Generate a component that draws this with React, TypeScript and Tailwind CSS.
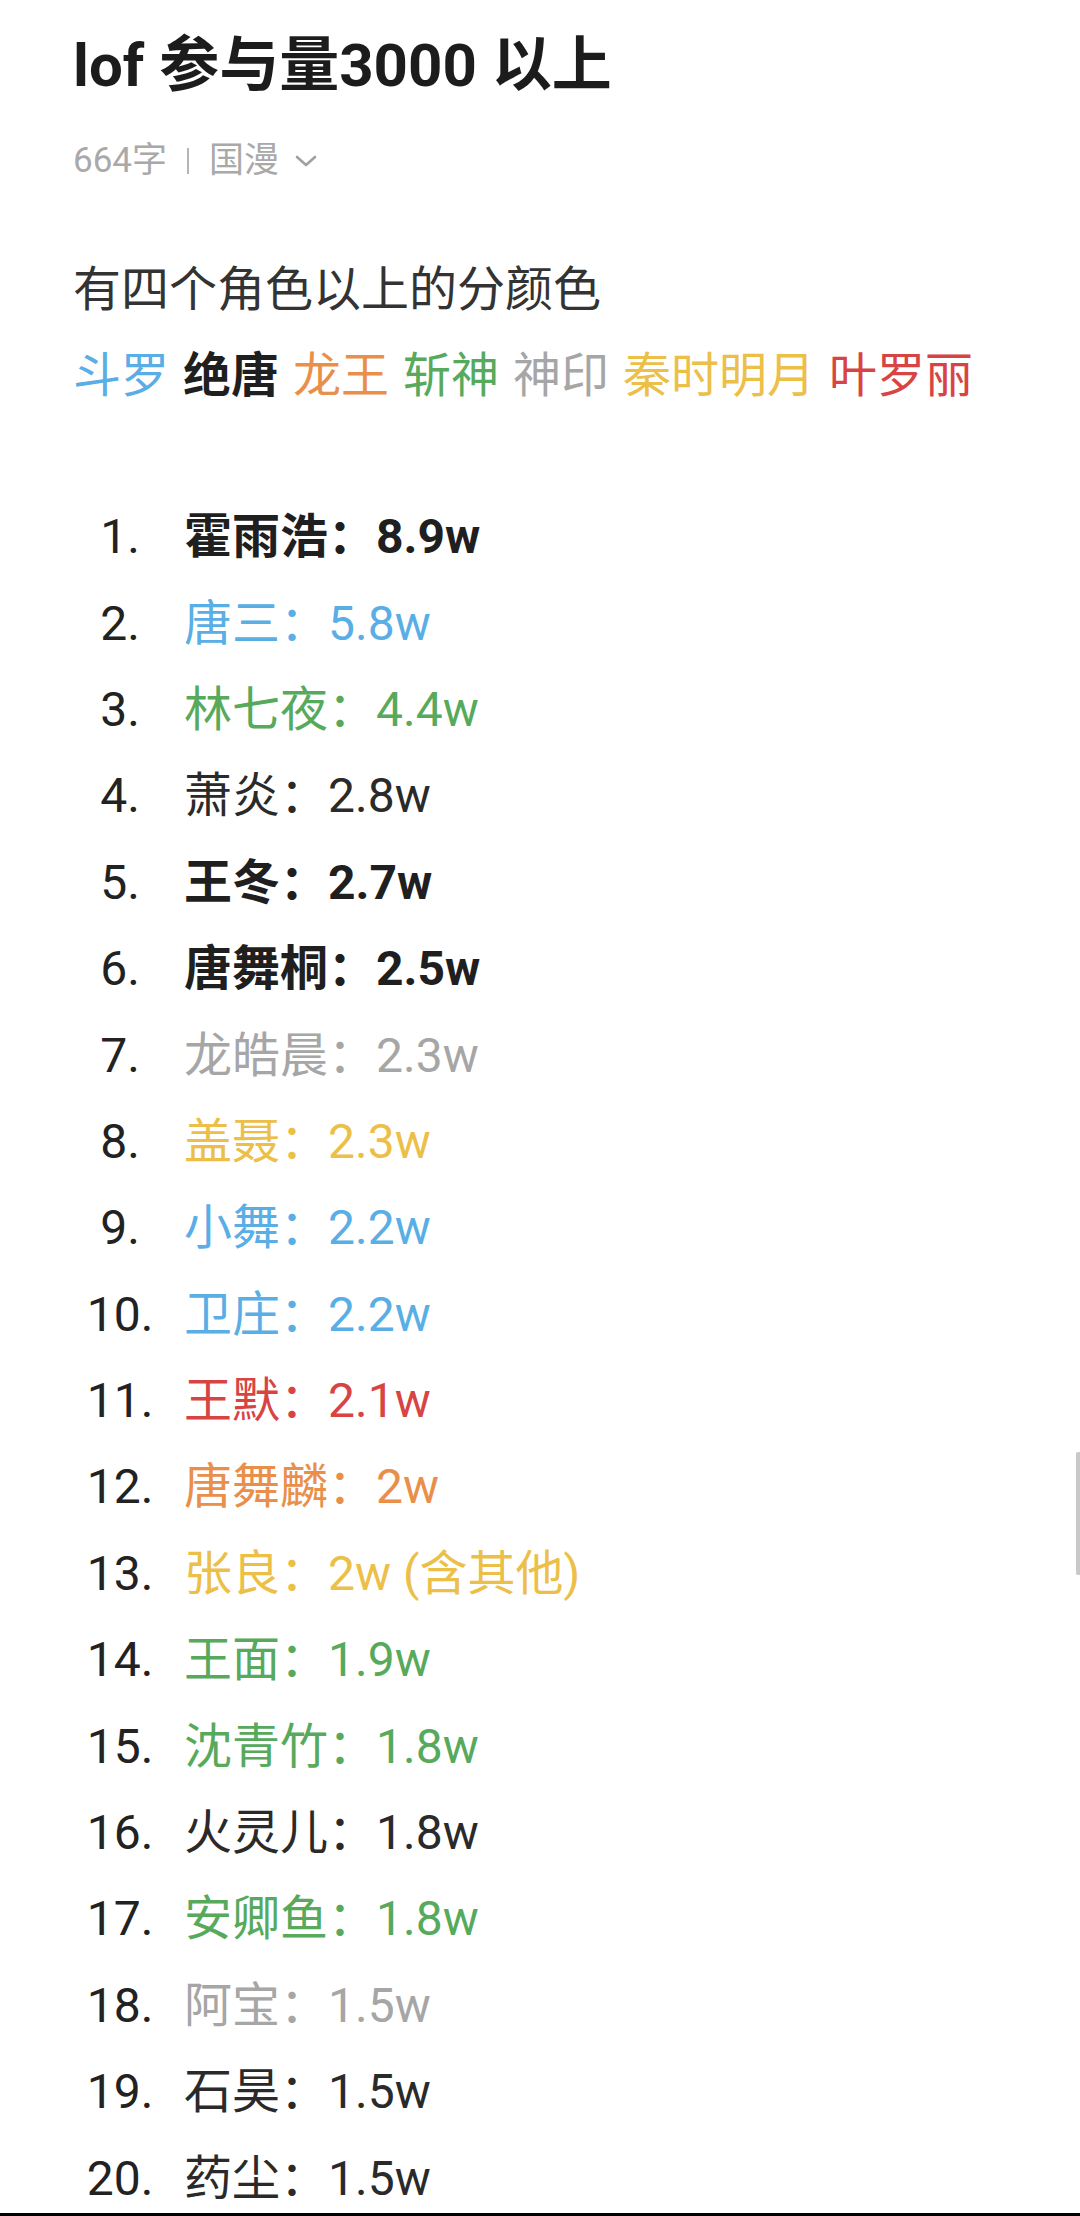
import React from "react";

type Item = { n: number; name: string; val: string; color: string; bold?: boolean };

const BLUE = "text-[#5aaee6]";
const GREEN = "text-[#57a95c]";
const ORANGE = "text-[#e98f4a]";
const YELLOW = "text-[#ecbf48]";
const RED = "text-[#d84343]";
const GRAY = "text-[#a6a6a6]";
const BLACK = "text-[#2a2a2a]";

const items: Item[] = [
  { n: 1, name: "霍雨浩", val: "8.9w", color: "text-[#1f1f1f]", bold: true },
  { n: 2, name: "唐三", val: "5.8w", color: BLUE },
  { n: 3, name: "林七夜", val: "4.4w", color: GREEN },
  { n: 4, name: "萧炎", val: "2.8w", color: BLACK },
  { n: 5, name: "王冬", val: "2.7w", color: "text-[#1f1f1f]", bold: true },
  { n: 6, name: "唐舞桐", val: "2.5w", color: "text-[#1f1f1f]", bold: true },
  { n: 7, name: "龙皓晨", val: "2.3w", color: GRAY },
  { n: 8, name: "盖聂", val: "2.3w", color: YELLOW },
  { n: 9, name: "小舞", val: "2.2w", color: BLUE },
  { n: 10, name: "卫庄", val: "2.2w", color: BLUE },
  { n: 11, name: "王默", val: "2.1w", color: RED },
  { n: 12, name: "唐舞麟", val: "2w", color: ORANGE },
  { n: 13, name: "张良", val: "2w (含其他)", color: YELLOW },
  { n: 14, name: "王面", val: "1.9w", color: GREEN },
  { n: 15, name: "沈青竹", val: "1.8w", color: GREEN },
  { n: 16, name: "火灵儿", val: "1.8w", color: BLACK },
  { n: 17, name: "安卿鱼", val: "1.8w", color: GREEN },
  { n: 18, name: "阿宝", val: "1.5w", color: GRAY },
  { n: 19, name: "石昊", val: "1.5w", color: BLACK },
  { n: 20, name: "药尘", val: "1.5w", color: BLACK },
];

export default function App() {
  return (
    <div
      className="relative w-[1080px] h-[2216px] overflow-hidden bg-white"
      style={{ fontFamily: "Roboto, 'Noto Sans CJK SC', sans-serif" }}
    >
      <div className="pl-[73px] pt-[24px]">
        <h1 className="text-[60px] leading-[84px] font-bold text-[#1c1c1c]">
          lof 参与量3000 以上
        </h1>
        <div className="mt-[33px] flex items-center h-[40px] text-[35px] text-[#a9a9a9]">
          <span>664字</span>
          <span className="mx-[20px] w-[2px] h-[26px] bg-[#b5b5b5]" />
          <span>国漫</span>
          <svg width="22" height="14" viewBox="0 0 22 14" className="ml-[16px]">
            <path d="M2 3 L11 11 L20 3" fill="none" stroke="#a0a0a0" strokeWidth="2.6" strokeLinecap="round" strokeLinejoin="round" />
          </svg>
        </div>
        <p className="mt-[76px] text-[48px] leading-[66px] text-[#333333]">有四个角色以上的分颜色</p>
        <div className="mt-[20px] flex gap-[14px] text-[48px] leading-[66px]">
          <span className={BLUE}>斗罗</span>
          <span className="text-[#1f1f1f] font-bold">绝唐</span>
          <span className={ORANGE}>龙王</span>
          <span className={GREEN}>斩神</span>
          <span className={GRAY}>神印</span>
          <span className={YELLOW}>秦时明月</span>
          <span className={RED}>叶罗丽</span>
        </div>
        <ol className="mt-[85px] flex flex-col">
          {items.map((it) => (
            <li key={it.n} className="flex items-center h-[86.4px] text-[48px]">
              <span className="w-[94px] text-center text-[#222222]">{it.n}.</span>
              <span className={`ml-[17px] ${it.color} ${it.bold ? "font-bold" : ""}`}>
                {it.name}：{it.val}
              </span>
            </li>
          ))}
        </ol>
      </div>
      <div className="absolute right-0 top-[1452px] w-[4px] h-[123px] bg-[#c9c9c9] rounded-l-[2px]" />
      <div className="absolute left-0 bottom-0 w-full h-[3px] bg-black" />
    </div>
  );
}
